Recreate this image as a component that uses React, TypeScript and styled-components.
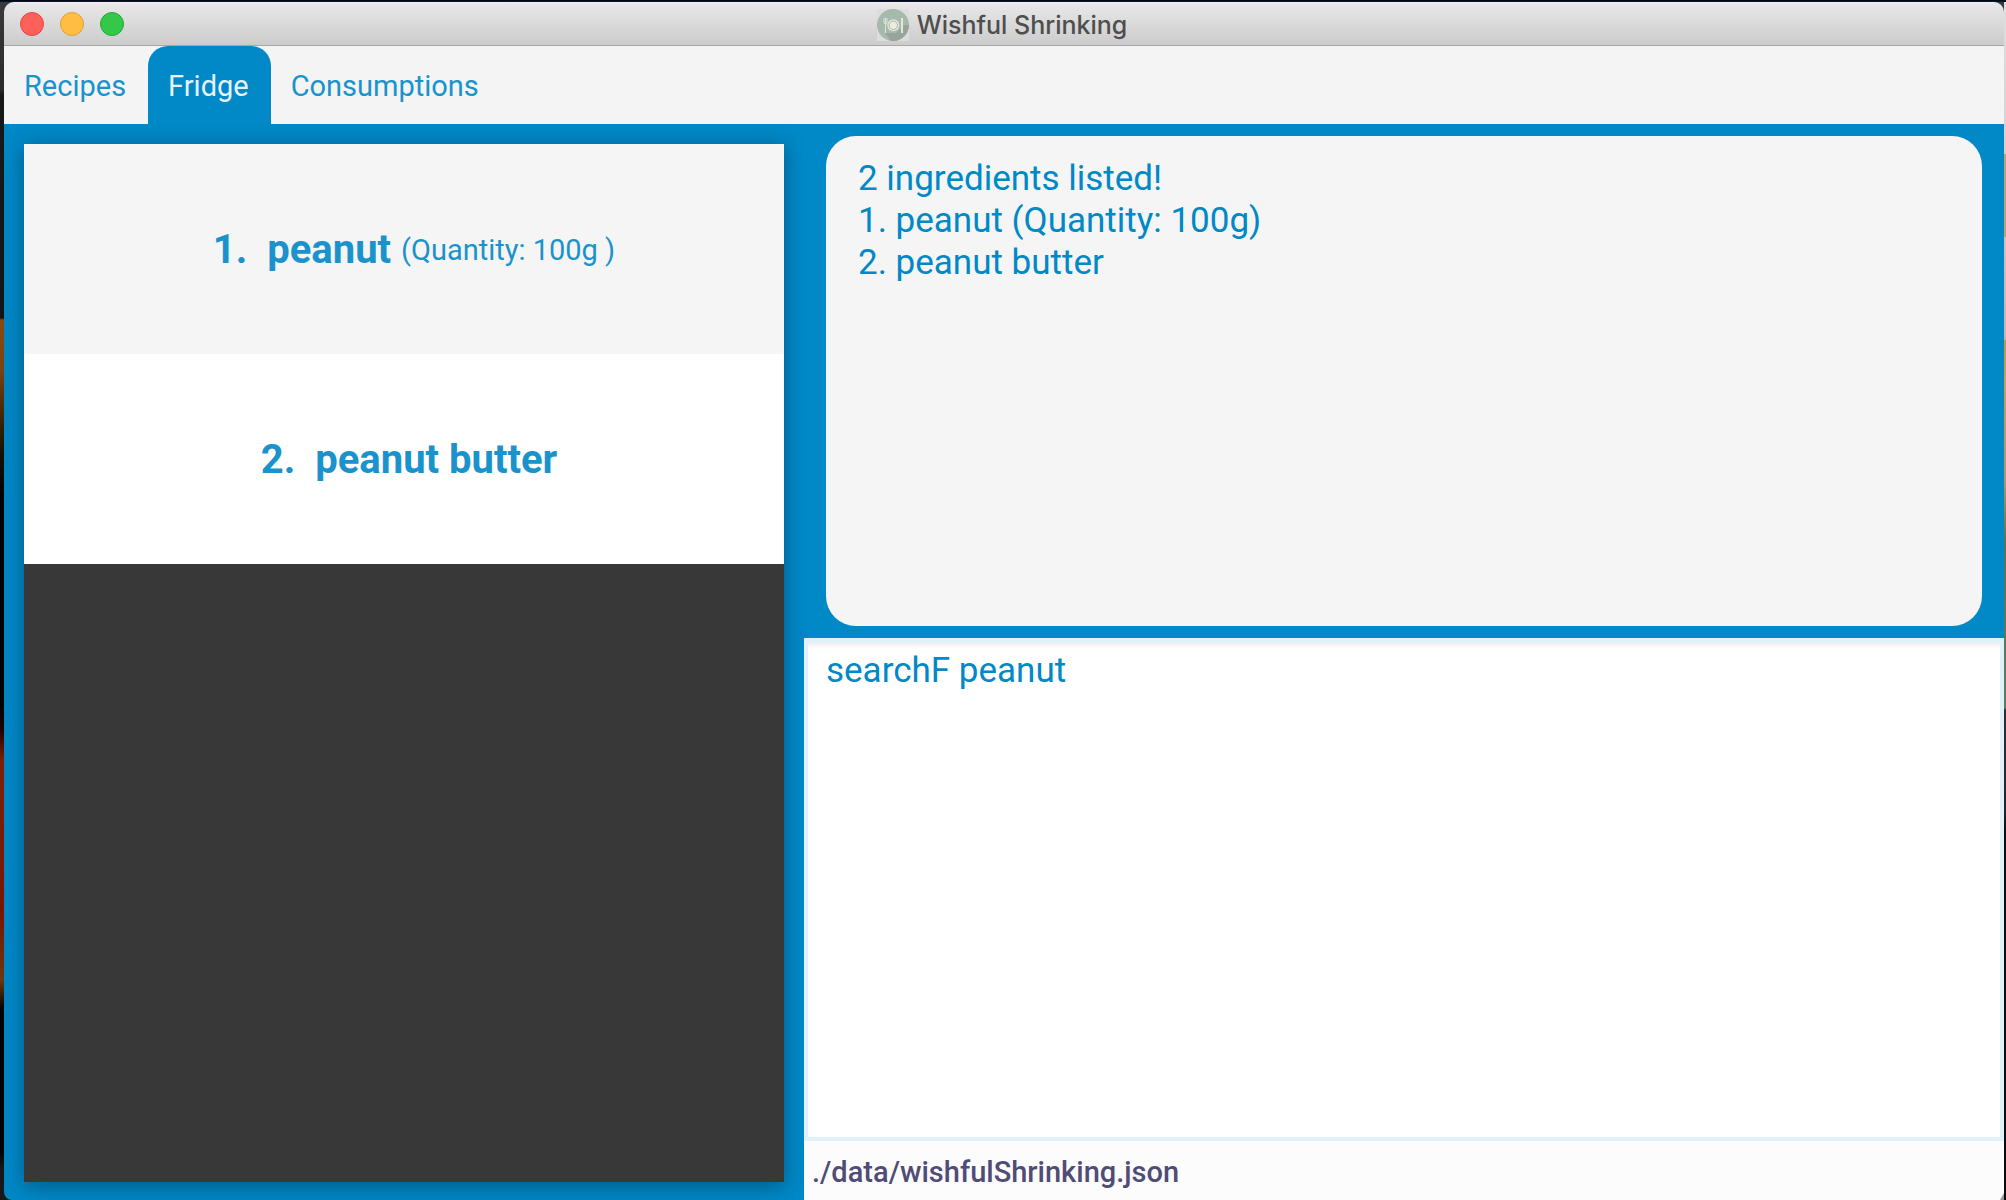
import React, { useState } from "react";
import styled, { createGlobalStyle } from "styled-components";

const BLUE = "#0088c7";
const SOFT_BLUE = "#1a93cc";

const GlobalStyle = createGlobalStyle`
  * { box-sizing: border-box; }
  html, body, #root { height: 100%; margin: 0; }
  body { font-family: Roboto, "Liberation Sans", sans-serif; overflow: hidden; }
`;

const Desktop = styled.div`
  min-height: 100vh;
  display: flex;
  padding: 2px 2px 0 4px;
  background:
    linear-gradient(#00040f, #0b1830) top / 100% 2px no-repeat,
    linear-gradient(to bottom, #e0e0e0 0, #d0d0d0 154px, #b5a578 154px, #b5a578 237px, #c4c4c8 237px, #b8b8bc 340px, #b59a50 340px, #c0a058 380px, #a89878 480px, #55745a 540px, #55805f 708px, #2c3034 710px, #22262a 810px, #0c0c10 830px) right / 2px 100% no-repeat,
    linear-gradient(to bottom, #3a3a3a 0, #2b2b2b 90px, #181818 95px, #141414 318px, #8a4a10 320px, #7a4210 370px, #1a1200 450px, #000 500px, #000 700px, #200000 730px, #7a2008 760px, #7a1c08 860px, #7a1400 910px, #6a3810 980px, #000 1010px, #000 1150px, #181818 1170px);
`;

const Window = styled.div`
  flex: 1;
  display: flex;
  flex-direction: column;
  border-radius: 10px 10px 0 8px;
  overflow: hidden;
  background: ${BLUE};
`;

const TitleBar = styled.header`
  height: 44px;
  display: flex;
  align-items: center;
  background: linear-gradient(#e8e8e8, #cccccc);
  border-top: 1px solid #f4f4f4;
  border-bottom: 1px solid #a6a6a6;
`;

const Side = styled.div`
  flex: 1;
  display: flex;
  gap: 16px;
  padding-left: 16px;
`;

const Light = styled.button<{ $fill: string; $edge: string }>`
  width: 24px;
  height: 24px;
  padding: 0;
  border-radius: 50%;
  border: 1px solid ${(p) => p.$edge};
  background: ${(p) => p.$fill};
`;

const Title = styled.h1`
  display: flex;
  align-items: center;
  gap: 8px;
  margin: 0;
  padding: 2px 4px 0 0;
  font: 500 25px/32px Inter, "Noto Sans", sans-serif;
  color: #4e4e4e;
`;

const Tabs = styled.nav`
  display: flex;
  height: 78px;
  background: #f4f4f4;
`;

const Tab = styled.button<{ $active: boolean }>`
  padding: 2px 22px 0 20px;
  border: 0;
  border-radius: 20px 20px 0 0;
  font: 400 29px/36px Roboto, sans-serif;
  color: ${(p) => (p.$active ? "#e6f3fa" : SOFT_BLUE)};
  background: ${(p) => (p.$active ? BLUE : "transparent")};
`;

const Main = styled.main`
  flex: 1;
  display: grid;
  grid-template-columns: 2fr 3fr;
  min-height: 0;
`;

const ListPane = styled.section`
  display: flex;
  padding: 20px 20px 18px;
`;

const List = styled.ol`
  flex: 1;
  margin: 0;
  padding: 0;
  list-style: none;
  background: #383838;
  box-shadow: 0 4px 20px rgba(0, 0, 0, 0.35);
`;

const Item = styled.li`
  height: 210px;
  display: flex;
  align-items: center;
  justify-content: center;
  padding: 2px 0 0 20px;
  color: ${SOFT_BLUE};
  background: #f5f5f5;
  &:nth-child(even) { background: #ffffff; }
`;

const Name = styled.span`
  font-weight: 700;
  font-size: 40px;
  line-height: 48px;
  white-space: pre;
`;

const Quantity = styled.span`
  margin-left: 10px;
  font-size: 29px;
  line-height: 36px;
`;

const WorkPane = styled.section`
  display: flex;
  flex-direction: column;
  min-width: 0;
`;

const ResultFrame = styled.div`
  flex: 490;
  display: flex;
  padding: 12px 22px;
`;

const Result = styled.output`
  flex: 1;
  padding: 22px 32px;
  border-radius: 30px;
  font-size: 35px;
  line-height: 42px;
  white-space: pre-line;
  color: ${BLUE};
  background: #f5f5f5;
`;

const Command = styled.textarea`
  flex: 481;
  min-height: 0;
  margin: 0;
  padding: 8px 18px 6px;
  border: 4px solid #dff1f9;
  border-radius: 0;
  outline: 0;
  resize: none;
  font: 400 35px/42px Roboto, sans-serif;
  color: ${BLUE};
  background: #ffffff;
  box-shadow: inset 0 8px 6px -6px rgba(0, 0, 0, 0.1);
`;

const StatusBar = styled.footer`
  height: 59px;
  display: flex;
  align-items: center;
  justify-content: space-between;
  padding: 2px 0 0 8px;
  font-size: 29px;
  font-weight: 500;
  line-height: 36px;
  color: #504c76;
  background: #fcfcfd;
`;

const Grip = styled.svg`
  align-self: flex-end;
`;

function PlateIcon() {
  return (
    <svg width="32" height="32" viewBox="0 0 32 32" aria-hidden="true">
      <rect width="32" height="32" fill="#dddddd" />
      <circle cx="16" cy="16" r="16" fill="#a5b9ad" />
      <path d="M19 24 L27 16 L32 16 A16 16 0 0 1 14 32 L8 24 Z" fill="#98a59d" />
      <circle cx="16.300" cy="16.300" r="6" fill="#e6e7da" />
      <circle cx="16.300" cy="16.300" r="4.200" fill="#ededdf" stroke="#a3b0a6" strokeWidth="0.900" />
      <path d="M7 9v4q0 2 1.500 2T10 13V9M8.500 9v15" stroke="#e0e2d5" fill="none" />
      <path d="M25 9v15" stroke="#e5e6d8" strokeWidth="2" fill="none" />
    </svg>
  );
}

const tabs = ["Recipes", "Fridge", "Consumptions"];
const ingredients = [
  { name: "peanut", quantity: "(Quantity: 100g )" },
  { name: "peanut butter", quantity: "" },
];

export default function App() {
  const [active, setActive] = useState("Fridge");
  return (
    <Desktop>
      <GlobalStyle />
      <Window>
        <TitleBar>
          <Side>
            <Light aria-label="Close" $fill="#ff605c" $edge="#e2463f" />
            <Light aria-label="Minimize" $fill="#ffbd44" $edge="#dfa033" />
            <Light aria-label="Zoom" $fill="#34c84a" $edge="#1fa934" />
          </Side>
          <Title>
            <PlateIcon />
            Wishful Shrinking
          </Title>
          <Side />
        </TitleBar>
        <Tabs>
          {tabs.map((t) => (
            <Tab key={t} $active={t === active} onClick={() => setActive(t)}>
              {t}
            </Tab>
          ))}
        </Tabs>
        <Main>
          <ListPane>
            <List>
              {ingredients.map((item, i) => (
                <Item key={item.name}>
                  <Name>{`${i + 1}.  ${item.name}`}</Name>
                  <Quantity>{item.quantity}</Quantity>
                </Item>
              ))}
            </List>
          </ListPane>
          <WorkPane>
            <ResultFrame>
              <Result>
                {"2 ingredients listed!\n1. peanut (Quantity: 100g)\n2. peanut butter"}
              </Result>
            </ResultFrame>
            <Command aria-label="Command" spellCheck={false} defaultValue="searchF peanut" />
            <StatusBar>
              ./data/wishfulShrinking.json
              <Grip width="4" height="7" viewBox="0 0 4 7" aria-hidden="true">
                <path d="M4 0v7H0z" fill="#999999" />
              </Grip>
            </StatusBar>
          </WorkPane>
        </Main>
      </Window>
    </Desktop>
  );
}
